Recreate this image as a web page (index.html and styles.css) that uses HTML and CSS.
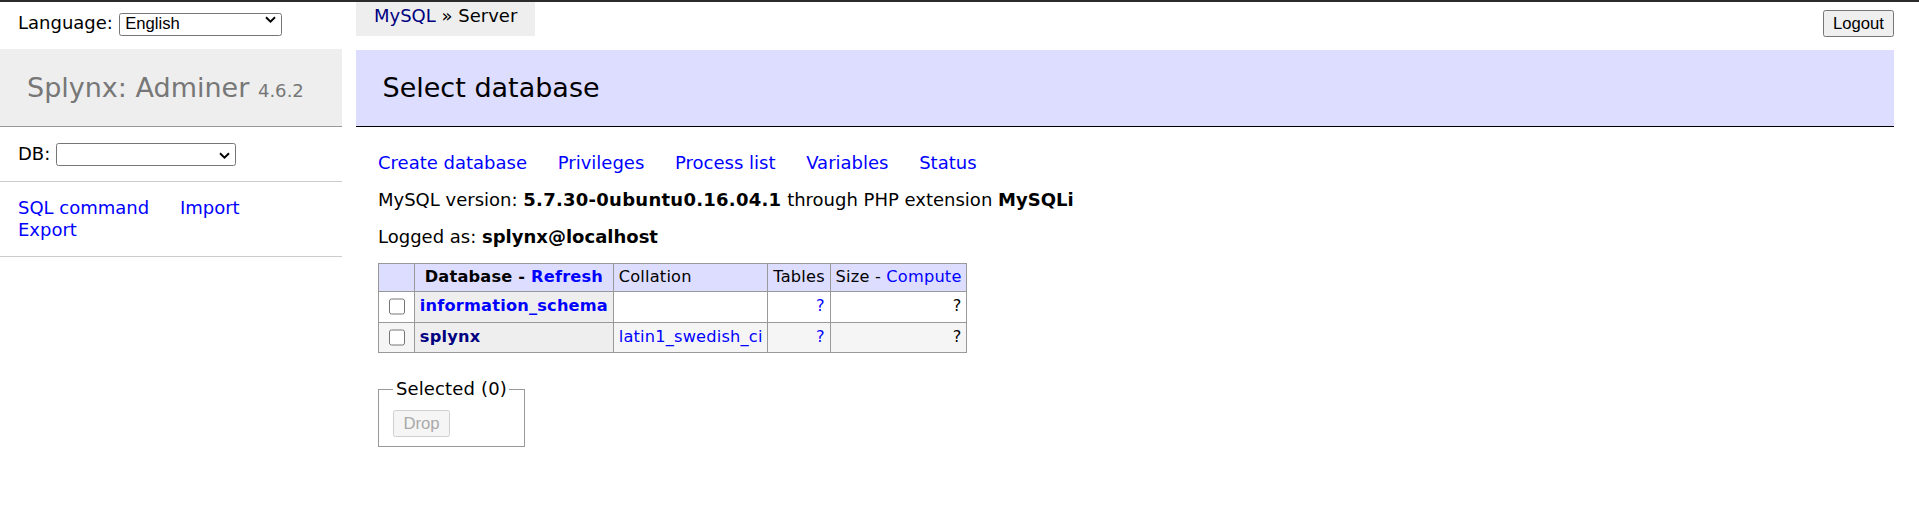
FILE: index.html
```html
<!DOCTYPE html>
<html lang="en">
<head>
<meta charset="utf-8">
<title>Select database - Adminer</title>
<link rel="stylesheet" href="styles.css">
</head>
<body>
<div class="topline"></div>
<div class="page">
  <aside class="side">
    <form class="lang">Language: <span class="sel sel-lang"><select class="select"><option>English</option></select><svg class="chev" width="11" height="7" viewBox="0 0 11 7"><path d="M1 1.2 L5.5 5.6 L10 1.2" fill="none" stroke="#000" stroke-width="1.9"/></svg></span></form>
    <div class="menu">
      <h1>Splynx: Adminer <span class="version">4.6.2</span></h1>
      <p class="dbs">DB: <span class="sel sel-db"><select class="select"><option></option></select><svg class="chev" width="11" height="7" viewBox="0 0 11 7"><path d="M1 1.2 L5.5 5.6 L10 1.2" fill="none" stroke="#000" stroke-width="1.9"/></svg></span></p>
      <p class="links"><a href="#">SQL command</a> <a href="#">Import</a> <a href="#">Export</a></p>
    </div>
  </aside>
  <main class="main">
    <div class="topbar">
      <div class="crumb"><a href="#" class="visited">MySQL</a> » Server</div>
      <button class="btn logout" type="button">Logout</button>
    </div>
    <h2>Select database</h2>
    <div class="content">
      <p class="links"><a href="#">Create database</a> <a href="#">Privileges</a> <a href="#">Process list</a> <a href="#">Variables</a> <a href="#">Status</a></p>
      <p>MySQL version: <b class="ver">5.7.30-0ubuntu0.16.04.1</b> through PHP extension <b>MySQLi</b></p>
      <p>Logged as: <b>splynx@localhost</b></p>
      <table class="grid">
        <thead>
          <tr><td></td><th>Database - <a href="#">Refresh</a></th><td>Collation</td><td>Tables</td><td>Size - <a href="#">Compute</a></td></tr>
        </thead>
        <tbody>
          <tr><td><input type="checkbox" class="check"></td><th><a href="#">information_schema</a></th><td></td><td class="num"><a href="#">?</a></td><td class="num">?</td></tr>
          <tr><td><input type="checkbox" class="check"></td><th><a href="#" class="visited">splynx</a></th><td><a href="#">latin1_swedish_ci</a></td><td class="num"><a href="#">?</a></td><td class="num">?</td></tr>
        </tbody>
      </table>
      <div class="footer">
        <fieldset class="selected">
          <legend>Selected <span>(0)</span></legend>
          <div><button class="btn" type="button" disabled>Drop</button></div>
        </fieldset>
      </div>
    </div>
  </main>
</div>
</body>
</html>
```

FILE: styles.css
```css
html, body {
  margin: 0;
  padding: 0;
  background: #fff;
}
body {
  color: #000;
  font: 18px/1.25 "DejaVu Sans", Verdana, sans-serif;
}
a {
  color: #00f;
  text-decoration: none;
}
a.visited {
  color: #000080;
}
.topline {
  position: absolute;
  top: 0;
  left: 0;
  right: 0;
  height: 2px;
  background: #2b2b2b;
  z-index: 5;
}
.page {
  display: flex;
  align-items: flex-start;
}
.side {
  width: 342px;
  flex-shrink: 0;
}
.lang {
  height: 49px;
  box-sizing: border-box;
  margin: 0;
  padding: 7.4px 18px 0;
  line-height: 32.4px;
}
.sel {
  position: relative;
  display: inline-block;
}
.select {
  appearance: none;
  -webkit-appearance: none;
  box-sizing: border-box;
  height: 23px;
  margin: 0;
  padding: 0 20px 0 5.5px;
  border: 1px solid #767676;
  border-radius: 2.5px;
  background: #fff;
  color: #000;
  font: 16.67px/20px "Liberation Sans", Arial, sans-serif;
}
.sel-lang .select {
  width: 163px;
}
.sel-db .select {
  width: 180px;
}
.chev {
  position: absolute;
  right: 6px;
  top: 9px;
  pointer-events: none;
}
.menu h1 {
  margin: 0;
  padding: 21.6px 27px;
  font-size: 27px;
  line-height: 1.25;
  font-weight: normal;
  color: #777;
  background: #eee;
  border-bottom: 1px solid #999;
}
.version {
  color: #777;
  font-size: 67%;
}
.menu p {
  margin: 0;
  padding: 14.4px 18px;
  border-bottom: 1px solid #ccc;
}
.menu p.dbs {
  padding: 16px 18px 15px;
}
.links a {
  white-space: nowrap;
  margin-right: 25px;
}
.main {
  flex: 1;
  min-width: 0;
  margin-left: 13.5px;
  padding-right: 25px;
}
.topbar {
  display: flex;
  justify-content: space-between;
  align-items: flex-start;
  height: 49.5px;
}
.crumb {
  height: 36px;
  line-height: 32.4px;
  padding: 0 18px 0 18.5px;
  background: #eee;
  white-space: nowrap;
}
.btn {
  box-sizing: border-box;
  height: 27px;
  padding: 0 9px;
  border: 1px solid #767676;
  border-radius: 2.5px;
  background: #efefef;
  color: #000;
  font: 16.67px/25px "Liberation Sans", Arial, sans-serif;
}
.btn:disabled {
  background: #f5f5f5;
  border-color: #cfcfcf;
  color: #a9a9a9;
}
.logout {
  margin-top: 10px;
}
h2 {
  margin: 0 0 25px;
  padding: 21.6px 27px;
  font-size: 27px;
  line-height: 1.25;
  font-weight: normal;
  color: #000;
  background: #ddf;
  border-bottom: 1px solid #000;
}
.content {
  padding-left: 22.5px;
  padding-bottom: 25px;
}
.content p {
  margin: 14.4px 25px 0 0;
}
.content b.ver {
  letter-spacing: 0.26px;
}
.grid {
  margin: 14.5px 25px 0 0;
  border-collapse: collapse;
  font-size: 16.2px;
  letter-spacing: 0.2px;
}
.grid td, .grid th {
  border: 1px solid #999;
  padding: 3.1px 4.86px;
}
.grid th {
  background: #eee;
  text-align: left;
}
.grid thead th {
  text-align: center;
  padding: 3.1px 8.1px;
}
.grid thead td, .grid thead th {
  background: #ddf;
}
.grid tbody tr:nth-child(2n) {
  background: #f5f5f5;
}
.grid .num {
  text-align: right;
}
.check {
  width: 16.5px;
  height: 16.5px;
  margin: 3.6px 3.75px 3.6px 5px;
  vertical-align: middle;
}
.footer {
  padding-top: 25px;
}
.selected {
  display: inline-block;
  vertical-align: top;
  margin: 0 9px 0 0;
  padding: 9px 14.4px;
  border: 1px solid #999;
  min-inline-size: 0;
}
.selected legend {
  padding: 0 2.5px;
  letter-spacing: 0.15px;
}
```
